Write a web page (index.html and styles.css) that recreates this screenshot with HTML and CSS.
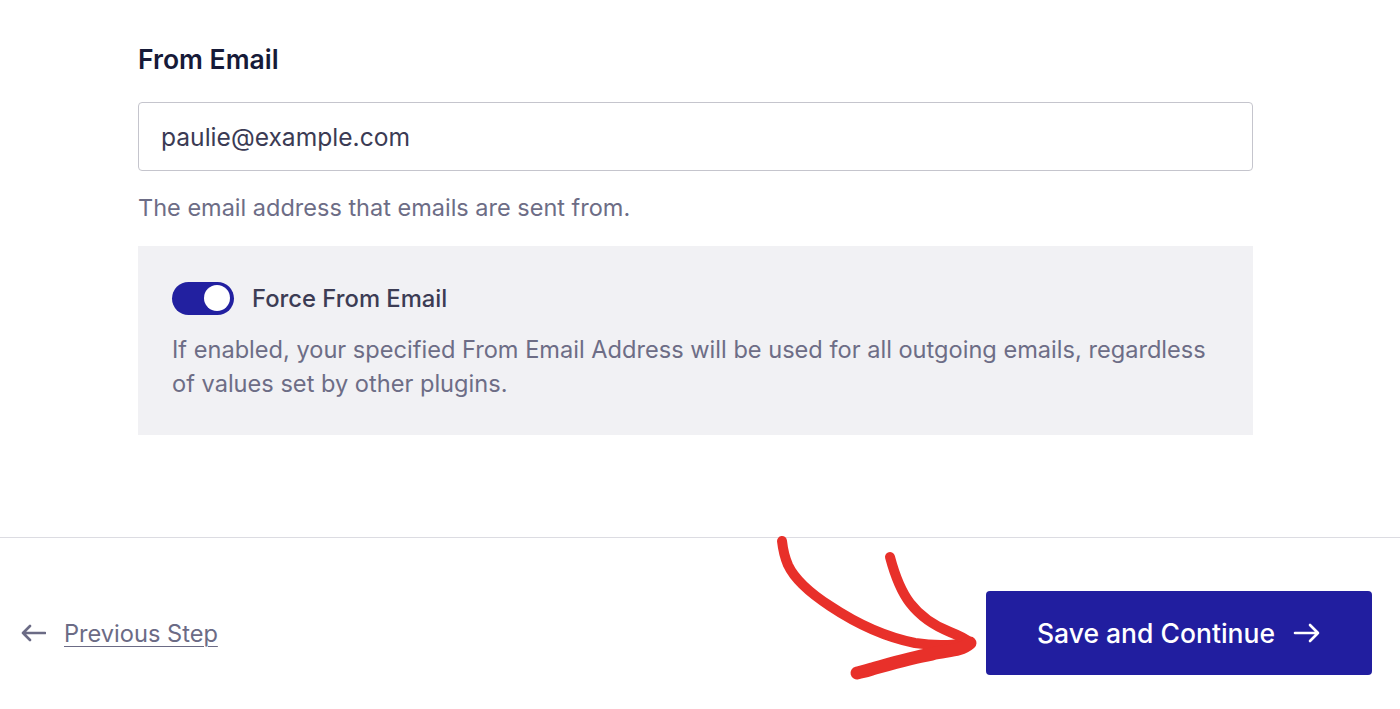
FILE: index.html
```html
<!DOCTYPE html>
<html lang="en">
<head>
<meta charset="utf-8">
<title>From Email</title>
<link rel="stylesheet" href="styles.css">
</head>
<body>
<main class="page">
  <section class="content">
    <h2 class="field-title">From Email</h2>
    <div class="input">paulie@example.com</div>
    <p class="help">The email address that emails are sent from.</p>
    <div class="panel">
      <div class="toggle-row">
        <span class="toggle"><span class="knob"></span></span>
        <span class="toggle-label">Force From Email</span>
      </div>
      <p class="panel-desc">If enabled, your specified From Email Address will be used for all outgoing emails, regardless of values set by other plugins.</p>
    </div>
  </section>
  <footer class="footer">
    <a class="prev" href="#">
      <svg class="prev-arrow" width="26" height="18" viewBox="0 0 26 18"><path d="M25 9H3M10 2L3 9l7 7" fill="none" stroke="currentColor" stroke-width="2.6" stroke-linecap="round" stroke-linejoin="round"/></svg>
      <span class="prev-text">Previous Step</span>
    </a>
    <button class="save">Save and Continue
      <svg class="save-arrow" width="28" height="20" viewBox="0 0 28 20"><path d="M2 10h23M17 2l8 8-8 8" fill="none" stroke="currentColor" stroke-width="2.6" stroke-linecap="round" stroke-linejoin="round"/></svg>
    </button>
  </footer>
  <svg class="annotation" width="1400" height="709" viewBox="0 0 1400 709">
    <g fill="none" stroke="#e8302a" stroke-linecap="round" stroke-linejoin="round">
      <path d="M782 541 C783 550 785 558 788 565 C795 580 810 593 830 606 C860 626 890 638 915 643 C935 646 952 646 968 642" stroke-width="10"/>
      <path d="M890 557 C894 572 900 590 910 603 C920 616 935 626 950 632 C960 636 966 639 969 642" stroke-width="10"/>
      <path d="M970 643 C960 652 945 650 932 654 C910 658 890 664 872 669 C866 671 861 672 857 673" stroke-width="13"/>
    </g>
  </svg>
</main>
</body>
</html>
```

FILE: styles.css
```css
html, body {
  margin: 0;
  padding: 0;
  background: #ffffff;
}

body {
  font-family: Inter, "Noto Sans", "Liberation Sans", sans-serif;
  color: #3c3c55;
}

.page {
  position: relative;
  width: 1400px;
  height: 709px;
  overflow: hidden;
}

.content {
  padding: 43px 147px 102px 138px;
}

.field-title {
  margin: 0;
  font-size: 26.5px;
  line-height: 32px;
  font-weight: 600;
  color: #161a38;
}

.input {
  margin-top: 27px;
  height: 69px;
  box-sizing: border-box;
  border: 1px solid #c5c5cd;
  border-radius: 4px;
  padding-left: 22px;
  display: flex;
  align-items: center;
  font-size: 24.6px;
  color: #3b3b54;
}

.help {
  margin: 23px 0 0;
  font-size: 23.5px;
  line-height: 28px;
  color: #6d6d86;
}

.panel {
  margin-top: 24px;
  background: #f1f1f4;
  padding: 35px 40px 34px 34px;
}

.toggle-row {
  display: flex;
  align-items: center;
  gap: 18px;
  height: 34px;
}

.toggle {
  width: 62px;
  height: 33px;
  border-radius: 17px;
  background: #2220a0;
  display: flex;
  align-items: center;
  justify-content: flex-end;
  padding-right: 4px;
  box-sizing: border-box;
}

.knob {
  width: 26px;
  height: 26px;
  border-radius: 50%;
  background: #ffffff;
}

.toggle-label {
  font-size: 23.8px;
  font-weight: 500;
  color: #3c3c54;
}

.panel-desc {
  margin: 18px 0 0;
  font-size: 23.6px;
  line-height: 34px;
  color: #6d6d86;
}

.footer {
  border-top: 1px solid #dcdce2;
  display: flex;
  align-items: center;
  justify-content: space-between;
  padding: 53px 28px 0 20px;
}

.prev {
  display: flex;
  align-items: center;
  gap: 18px;
  color: #6b6b85;
  text-decoration: none;
  font-size: 23.6px;
}

.prev-text {
  text-decoration: underline;
  text-underline-offset: 4px;
  text-decoration-thickness: 1px;
}

.save {
  width: 386px;
  height: 84px;
  border: none;
  border-radius: 4px;
  background: #211e9f;
  color: #ffffff;
  font-family: Inter, "Noto Sans", "Liberation Sans", sans-serif;
  font-size: 26.5px;
  font-weight: 500;
  display: flex;
  align-items: center;
  justify-content: center;
  gap: 18px;
  cursor: pointer;
}

.save-arrow {
  display: block;
}

.annotation {
  position: absolute;
  left: 0;
  top: 0;
  pointer-events: none;
}
```
